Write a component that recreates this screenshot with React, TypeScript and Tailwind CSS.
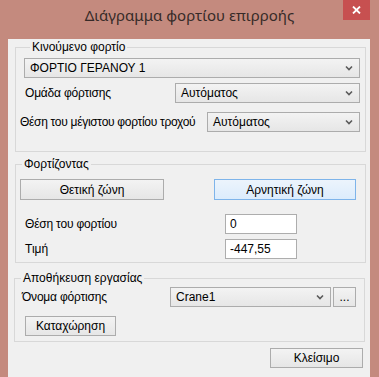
import React from 'react';

const titleFont = { fontFamily: '"Noto Sans", "Open Sans", sans-serif' };
const uiFont = { fontFamily: '"Liberation Sans", Arial, sans-serif' };

function Chevron() {
  return (
    <svg width="8" height="6" viewBox="0 0 8 6" className="shrink-0">
      <path d="M1 1.5 L4 4.5 L7 1.5" fill="none" stroke="#5a5a5a" strokeWidth="1.6" />
    </svg>
  );
}

function Combo({ value, className }: { value: string; className: string }) {
  return (
    <div
      className={`flex h-[20px] items-center justify-between border border-[#acacac] bg-linear-to-b from-[#f3f3f3] to-[#e6e6e6] pl-[5px] pr-[6px] text-[12px] text-black ${className}`}
    >
      <span className="whitespace-nowrap">{value}</span>
      <Chevron />
    </div>
  );
}

function Button({ label, className, active }: { label: string; className: string; active?: boolean }) {
  return (
    <button
      className={`flex items-center justify-center border text-[12px] text-black ${
        active
          ? 'border-[#7eb4ea] bg-linear-to-b from-[#ecf4fc] to-[#dcecfc]'
          : 'border-[#acacac] bg-linear-to-b from-[#f3f3f3] to-[#e6e6e6]'
      } ${className}`}
    >
      {label}
    </button>
  );
}

function TextBox({ value }: { value: string }) {
  return (
    <div className="flex h-[20px] w-[72px] items-center border border-[#adadad] bg-white pl-[4px] text-[12px] text-black">
      {value}
    </div>
  );
}

function Group({ title, className, children }: { title: string; className: string; children: React.ReactNode }) {
  return (
    <fieldset className={`border border-[#d8d8d8] ${className}`}>
      <legend className="ml-[6px] px-[2px] text-[12px] leading-[16px] text-black">{title}</legend>
      {children}
    </fieldset>
  );
}

export default function App() {
  return (
    <div className="relative h-[377px] w-[379px] overflow-hidden bg-[#c48a7e]" style={uiFont}>
      <div className="flex h-[31px] items-center justify-center pb-[1px] text-[15px] text-[#362a28]" style={titleFont}>
        Διάγραμμα φορτίου επιρροής
      </div>
      <div className="absolute right-[9px] top-0 flex h-[20px] w-[27px] items-center justify-center bg-[#c75050]">
        <svg width="9" height="8" viewBox="0 0 9 8">
          <path d="M1 0.5 L8 7.5 M8 0.5 L1 7.5" stroke="#fff" strokeWidth="1.8" />
        </svg>
      </div>

      <div className="ml-[8px] h-[342px] w-[362px] bg-[#f0f0f0]">
        <Group title="Κινούμενο φορτίο" className="ml-[7px] mt-[8px] w-[351px] pb-[19px] pl-[8px] pr-[5px]">
          <Combo value="ΦΟΡΤΙΟ ΓΕΡΑΝΟΥ 1" className="mt-[3px] w-full" />
          <div className="mt-[5px] flex items-center justify-between">
            <span className="whitespace-nowrap pl-[1px] text-[12px] tracking-[-0.2px] text-black">Ομάδα φόρτισης</span>
            <Combo value="Αυτόματος" className="w-[185px]" />
          </div>
          <div className="mt-[9px] flex items-center justify-between">
            <span className="-ml-[4px] whitespace-nowrap text-[12px] tracking-[-0.3px] text-black">
              Θέση του μέγιστου φορτίου τροχού
            </span>
            <Combo value="Αυτόματος" className="w-[153px]" />
          </div>
        </Group>

        <Group title="Φορτίζοντας" className="ml-[7px] mt-[4px] w-[351px] pb-[3px]">
          <div className="mt-[7px] flex">
            <Button label="Θετική ζώνη" className="ml-[4px] h-[21px] w-[144px]" />
            <Button label="Αρνητική ζώνη" active className="ml-[50px] h-[21px] w-[142px]" />
          </div>
          <div className="mt-[14px] flex items-center">
            <span className="w-[209px] pl-[9px] text-[12px] tracking-[-0.2px] text-black">Θέση του φορτίου</span>
            <TextBox value="0" />
          </div>
          <div className="mt-[5px] flex items-center">
            <span className="w-[209px] pl-[9px] text-[12px] text-black">Τιμή</span>
            <TextBox value="-447,55" />
          </div>
        </Group>

        <Group title="Αποθήκευση εργασίας" className="ml-[6px] mt-[7px] w-[351px] pb-[5px]">
          <div className="mt-[1px] flex items-center">
            <span className="w-[155px] pl-[7px] text-[12px] tracking-[-0.2px] text-black">Όνομα φόρτισης</span>
            <Combo value="Crane1" className="w-[161px]" />
            <Button label="..." className="ml-[2px] h-[20px] w-[23px]" />
          </div>
          <Button label="Καταχώρηση" className="ml-[10px] mt-[9px] h-[20px] w-[91px]" />
        </Group>

        <div className="mt-[6px] flex">
          <Button label="Κλείσιμο" className="ml-[262px] h-[20px] w-[93px]" />
        </div>
      </div>
    </div>
  );
}
